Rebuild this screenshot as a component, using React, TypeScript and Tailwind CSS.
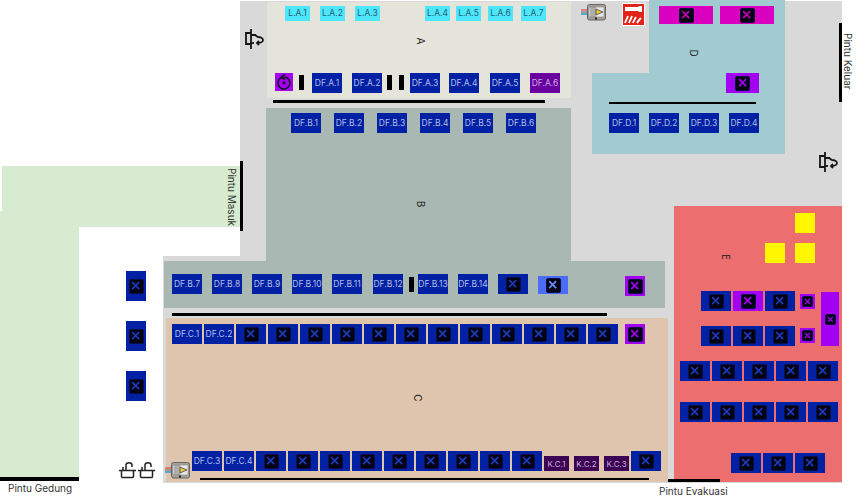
import React from "react";

const Xmark = ({ c, s = 15 }: { c: string; s?: number }) => (
  <span
    className="flex items-center justify-center rounded-[2px] bg-[#020214] border border-[#0a0f45]"
    style={{ width: s, height: s }}
  >
    <svg viewBox="0 0 16 16" width={s * 0.62} height={s * 0.62} fill="none" stroke={c} strokeWidth="3">
      <path d="M2 2 14 14M14 2 2 14" />
    </svg>
  </span>
);

type BoothProps = {
  t?: string;
  w?: number;
  h?: number;
  bg?: string;
  c?: string;
  text?: string;
  s?: number;
};

const Booth = ({ t, w = 30, h = 20, bg = "bg-[#0021a3]", c = "#1a3ab8", text = "text-[#b4bde8] text-[8.5px]", s }: BoothProps) => (
  <div
    className={`flex shrink-0 items-center justify-center ${bg} ${text} leading-none whitespace-nowrap`}
    style={{ width: w, height: h }}
  >
    {t ? t : <Xmark c={c} s={s} />}
  </div>
);

const Row = ({ x, y, gap, children }: { x: number; y: number; gap: number; children: React.ReactNode }) => (
  <div className="absolute flex" style={{ left: x, top: y, gap }}>
    {children}
  </div>
);

const Outlet = ({ x, y }: { x: number; y: number }) => (
  <svg className="absolute" style={{ left: x, top: y }} width="20" height="20" viewBox="0 0 20 20" fill="none" stroke="#151515" strokeWidth="1.800">
    <path d="M2 4h5v11H2zM7 0v20M7 6h5" />
    <path d="M7 14h3" />
    <path d="M11 6l3 2c3 0 5 1.500 5 3s-2 3-5 3h-1" />
    <path d="M15 12l-2 2 2 2" />
  </svg>
);

const Sink = ({ x, y }: { x: number; y: number }) => (
  <svg className="absolute" style={{ left: x, top: y }} width="17" height="17" viewBox="0 0 17 17" fill="none" stroke="#222" strokeWidth="1.500">
    <path d="M0 8.500h17" />
    <path d="M2.500 8.500v6a1 1 0 0 0 1 1h10a1 1 0 0 0 1-1v-6" />
    <path d="M7 8.500V3c0-3 6-3 6 0v2" />
    <path d="M4 5v3.500" />
  </svg>
);

const Panel = ({ x, y }: { x: number; y: number }) => (
  <svg className="absolute" style={{ left: x, top: y }} width="26" height="17" viewBox="0 0 26 17">
    <path d="M0 6h7" stroke="#d33" strokeWidth="1" />
    <path d="M0 8h7" stroke="#666" strokeWidth="1" />
    <path d="M0 10h7" stroke="#39c" strokeWidth="1.500" />
    <rect x="6.500" y=".5" width="18" height="15.500" rx="2" fill="#a8a29a" stroke="#666" />
    <rect x="8" y="3" width="15" height="10" fill="#e8e8e8" stroke="#777" strokeWidth=".5" />
    <path d="M10 3v10M12 3v10M14 3v10" stroke="#555" strokeWidth=".8" />
    <path d="M15 5l7 3-7 3z" fill="#e8c840" stroke="#333" strokeWidth=".7" />
    <rect x="14" y="13.500" width="2" height="2" fill="#222" />
  </svg>
);

const la = [285, 320, 355, 425, 456, 488, 521];
const cBoxes = Array.from({ length: 12 }, (_, i) => i);
const cBottom = Array.from({ length: 9 }, (_, i) => i);
const five = [0, 1, 2, 3, 4];
const bars: [number, number, number, number][] = [
  [299, 75, 5, 15], [387, 75, 5, 15], [399, 75, 5, 15], [409, 277, 5, 15],
  [273, 100, 272, 3], [609, 102, 147, 2], [172, 313, 435, 3], [200, 478, 449, 2],
  [839, 23, 3, 79], [240, 161, 3, 70], [0, 477, 79, 4], [668, 479, 52, 3],
];
const letter = "absolute rotate-90 text-[10px] leading-none text-[#222]";
const purple = "bg-[#a100f2]";
const violet = "#a100f2";
const magenta = "bg-[#da00c0]";
const pink = "#c000b0";

export default function App() {
  return (
    <div className="relative w-[858px] h-[496px] overflow-hidden bg-white font-['Inter',sans-serif]">
      {/* floor */}
      <div className="absolute left-[240px] top-[1px] w-[602px] h-[482px] bg-[#d9d9d9]" />
      <div className="absolute left-[163px] top-[256px] w-[77px] h-[227px] bg-[#d9d9d9]" />
      {/* garden */}
      <div className="absolute left-[2px] top-[166px] w-[238px] h-[61px] bg-[#d6ebd0]" />
      <div className="absolute left-0 top-[211px] w-[79px] h-[266px] bg-[#d6ebd0]" />
      {/* zones */}
      <div className="absolute left-[267px] top-[2px] w-[304px] h-[96px] bg-[#e4e4da]" />
      <div className="absolute left-[266px] top-[108px] w-[305px] h-[154px] bg-[#a9b8b3]" />
      <div className="absolute left-[164px] top-[261px] w-[501px] h-[47px] bg-[#a9b8b3]" />
      <div className="absolute left-[166px] top-[318px] w-[502px] h-[164px] bg-[#dfc5ae]" />
      <div className="absolute left-[649px] top-0 w-[136px] h-[73px] bg-[#a2cbd1]" />
      <div className="absolute left-[592px] top-[73px] w-[193px] h-[81px] bg-[#a2cbd1]" />
      <div className="absolute left-[674px] top-[206px] w-[168px] h-[276px] bg-[#ed6e6e]" />

      {bars.map(([x, y, w, h], i) => (
        <div key={i} className="absolute bg-black" style={{ left: x, top: y, width: w, height: h }} />
      ))}

      {/* zone A */}
      {la.map((x, i) => (
        <div key={x} className="absolute flex items-center justify-center w-[25px] h-[15px] bg-[#4de7fd] text-[#2b5c70] text-[8.5px] leading-none" style={{ left: x, top: 6 }}>
          {`L.A.${i + 1}`}
        </div>
      ))}
      <Row x={312} y={73} gap={10}>
        <Booth t="DF.A.1" />
        <Booth t="DF.A.2" />
      </Row>
      <Row x={410} y={73} gap={9}>
        <Booth t="DF.A.3" />
        <Booth t="DF.A.4" />
      </Row>
      <Row x={490} y={73} gap={10}>
        <Booth t="DF.A.5" />
        <Booth t="DF.A.6" bg="bg-[#6a00a0]" text="text-[#c8a8e0] text-[8.5px]" />
      </Row>

      {/* zone B */}
      <Row x={291} y={113} gap={13}>
        {[1, 2, 3, 4, 5, 6].map((i) => <Booth key={i} t={`DF.B.${i}`} />)}
      </Row>
      <Row x={172} y={274} gap={10}>
        {[7, 8, 9, 10, 11].map((i) => <Booth key={i} t={`DF.B.${i}`} />)}
      </Row>
      <div className="absolute left-[373px] top-[274px]">
        <Booth t="DF.B.12" />
      </div>
      <Row x={418} y={274} gap={10}>
        <Booth t="DF.B.13" />
        <Booth t="DF.B.14" />
        <Booth />
      </Row>
      <Row x={538} y={276} gap={57}>
        <Booth h={18} bg="bg-[#4a6cf7]" c="#6a8cff" />
        <Booth w={20} bg={purple} c={violet} />
      </Row>

      {/* zone C */}
      <Row x={172} y={324} gap={2}>
        <Booth t="DF.C.1" />
        <Booth t="DF.C.2" />
        {cBoxes.map((i) => <Booth key={i} />)}
      </Row>
      <div className="absolute left-[625px] top-[324px]">
        <Booth w={20} bg={purple} c={violet} />
      </div>
      <Row x={192} y={451} gap={2}>
        <Booth t="DF.C.3" />
        <Booth t="DF.C.4" />
        {cBottom.map((i) => <Booth key={i} />)}
      </Row>
      <Row x={544} y={456} gap={5}>
        {[1, 2, 3].map((i) => (
          <Booth key={i} t={`K.C.${i}`} w={25} h={15} bg="bg-[#3c0055]" text="text-[#c9b3d3] text-[8px]" />
        ))}
      </Row>
      <div className="absolute left-[631px] top-[451px]">
        <Booth />
      </div>

      {/* left column */}
      <div className="absolute left-[126px] top-[271px] flex flex-col gap-[20px]">
        {[0, 1, 2].map((i) => <Booth key={i} w={20} h={30} />)}
      </div>

      {/* zone D */}
      <Row x={659} y={6} gap={7}>
        <Booth w={54} h={18} bg={magenta} c={pink} />
        <Booth w={54} h={18} bg={magenta} c={pink} />
      </Row>
      <div className="absolute left-[726px] top-[73px]">
        <Booth w={33} bg={purple} c={violet} />
      </div>
      <Row x={609} y={113} gap={10}>
        {[1, 2, 3, 4].map((i) => <Booth key={i} t={`DF.D.${i}`} />)}
      </Row>

      {/* zone E */}
      {[[795, 213], [765, 243], [795, 243]].map(([x, y]) => (
        <div key={`${x}${y}`} className="absolute w-[20px] h-[20px] bg-[#fff600]" style={{ left: x, top: y }} />
      ))}
      <Row x={701} y={291} gap={2}>
        <Booth />
        <Booth bg={purple} c={violet} />
        <Booth />
      </Row>
      <Row x={701} y={326} gap={2}>
        <Booth />
        <Booth />
        <Booth />
      </Row>
      <div className="absolute left-[800px] top-[294px]">
        <Booth w={15} h={15} bg={purple} c={violet} s={11} />
      </div>
      <div className="absolute left-[800px] top-[328px]">
        <Booth w={15} h={15} bg={purple} c={violet} s={11} />
      </div>
      <div className="absolute left-[821px] top-[292px]">
        <Booth w={18} h={54} bg={purple} c={violet} s={11} />
      </div>
      <Row x={680} y={361} gap={2}>
        {five.map((i) => <Booth key={i} />)}
      </Row>
      <Row x={680} y={402} gap={2}>
        {five.map((i) => <Booth key={i} />)}
      </Row>
      <Row x={731} y={453} gap={2}>
        <Booth />
        <Booth />
        <Booth />
      </Row>

      {/* rotating sign */}
      <div className="absolute left-[275px] top-[73px] w-[18px] h-[18px] bg-[#a100f2] flex items-center justify-center">
        <svg width="16" height="16" viewBox="0 0 16 16" fill="none" stroke="#111" strokeWidth="1.500">
          <path d="M5.500 3.500a6 6 0 1 0 3-.5" />
          <path d="M9 .5 5.500 3.200 9 5.500" />
          <circle cx="8" cy="9" r="1.200" fill="#111" strokeWidth=".5" />
        </svg>
      </div>

      <div className={`${letter} left-[418px] top-[36px]`}>A</div>
      <div className={`${letter} left-[418px] top-[199px]`}>B</div>
      <div className={`${letter} left-[414px] top-[393px]`}>C</div>
      <div className={`${letter} left-[690px] top-[48px]`}>D</div>
      <div className={`${letter} left-[723px] top-[252px]`}>E</div>

      <Outlet x={244} y={29} />
      <Outlet x={818} y={152} />
      <Panel x={581} y={4} />
      <Panel x={165} y={462} />
      <Sink x={119} y={462} />
      <Sink x={138} y={462} />

      {/* fire extinguisher sign */}
      <svg className="absolute left-[622px] top-[3px]" width="23" height="23" viewBox="0 0 23 23">
        <rect width="23" height="23" fill="#fff" />
        <rect x="1" y="1" width="21" height="21" fill="#e2231a" />
        <path d="M3 4h13l1-1h3v6h-3l-1-1H3z" fill="#fff" />
        <path d="M3 20c1-3 2-4 3-7M7 20c1-3 2-4 3-7M11 20c1-3 2-4 3-6M15 20c1-2 2-3 4-5" stroke="#fff" strokeWidth="1.800" fill="none" />
      </svg>

      <div className="absolute left-[843px] top-[33px] rotate-90 origin-top-left translate-x-[10px] text-[10px] leading-none text-[#333] whitespace-nowrap">Pintu Keluar</div>
      <div className="absolute left-[227px] top-[168px] rotate-90 origin-top-left translate-x-[10px] text-[10px] leading-none text-[#333] whitespace-nowrap">Pintu Masuk</div>
      <div className="absolute left-[8px] top-[482px] text-[10px] leading-[12px] text-[#333]">Pintu Gedung</div>
      <div className="absolute left-[659px] top-[485px] text-[10px] leading-[12px] text-[#333]">Pintu Evakuasi</div>
    </div>
  );
}
